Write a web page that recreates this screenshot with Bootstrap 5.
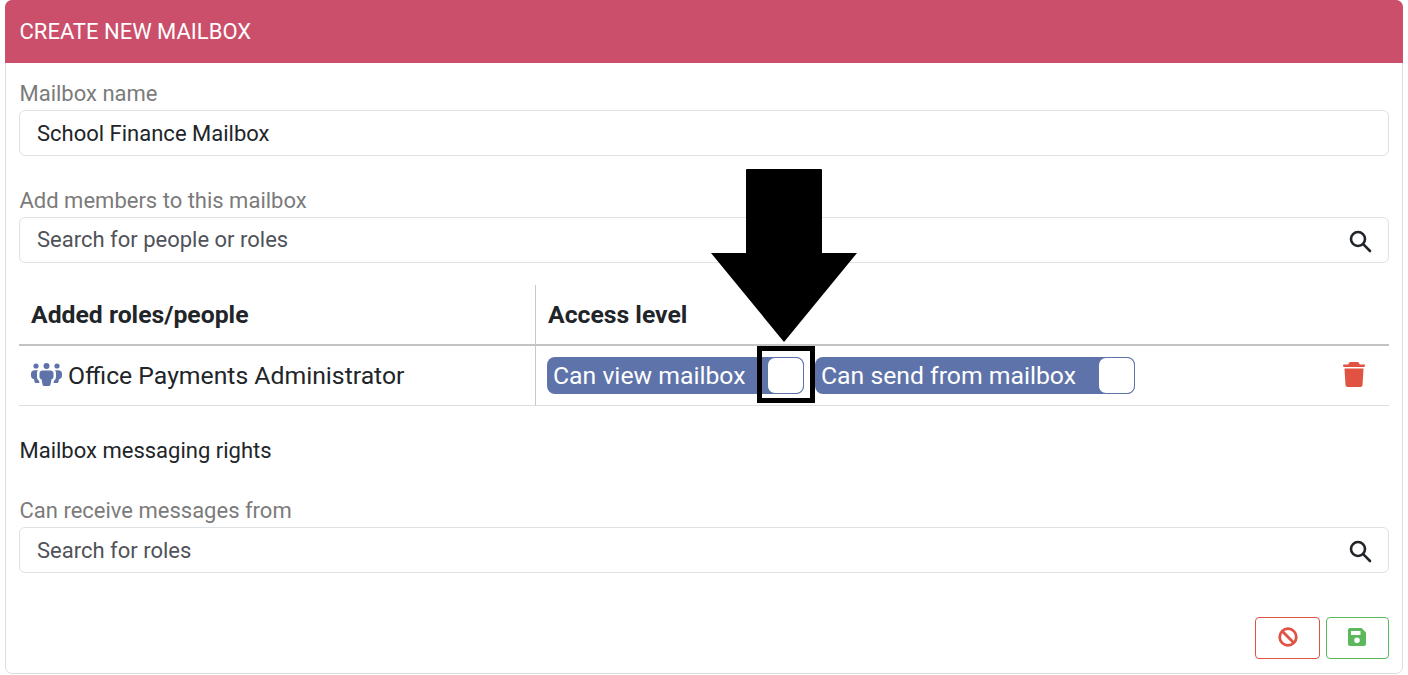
<!DOCTYPE html>
<html lang="en">
<head>
<meta charset="utf-8">
<title>Create new mailbox</title>
<link rel="stylesheet" href="https://cdn.jsdelivr.net/npm/bootstrap@5.3.0/dist/css/bootstrap.min.css">
<style>
html, body { height: 100%; background: #fff; overflow: hidden; }
body { font-family: Roboto, "Liberation Sans", sans-serif; color: #212529; position: relative; padding: 0 5px; }
.mb-panel { height: 674px; border: 1px solid #dedede; border-radius: 7px; }
.mb-head { background: #cb4e6a; color: #fff; height: 63px; margin: -1px -1px 0; padding: 0 14.5px; font-size: 22px; display: flex; align-items: center; border: 0; border-radius: 7px 7px 0 0 !important; }
.mb-body { padding: 15px 13px 0; display: flex; flex-direction: column; }
.mb-label { font-size: 22px; color: #7b7b7b; line-height: 32px; margin: 0; display: block; height: 32px; padding-left: .5px; }
.mb-input { height: 46px; font-size: 22px; padding: 0 17px; border: 1px solid #dee2e6; border-radius: 6px; color: #212529; background: #fff; box-shadow: none; }
.mb-input::placeholder { color: #4f5359; opacity: 1; }
.mb-input-up { padding-bottom: 2px; }
.mb-search { position: relative; }
.mb-search svg { position: absolute; right: 17px; top: 12px; }
.mb-gap1 { margin-top: 29px; }
.mb-tablewrap { margin-top: 22px; }
.mb-grid { display: grid; grid-template-columns: 516px 1fr; }
.mb-th { font-size: 24.75px; font-weight: 700; height: 61px; border-bottom: 2px solid #c4c4c4; display: flex; align-items: center; padding: 0 12px; padding-top: 1px; }
.mb-td { height: 60px; border-bottom: 1px solid #dedede; display: flex; align-items: center; padding: 0 12px; font-size: 24.75px; }
.mb-v { border-left: 1px solid #c9c9c9; }
.mb-td.mb-v { padding-left: 11px; }
.mb-role { gap: 6px; }
.mb-people { margin-top: -2px; }
.mb-tog { height: 37px; background: #5e73a9; color: #fff; border-radius: 8px; display: inline-flex; align-items: center; padding-left: 6px; position: relative; font-size: 24.75px; white-space: nowrap; }
.mb-tog i { position: absolute; right: 0; top: 0; width: 37px; height: 37px; background: #fff; border: 1px solid #5e73a9; border-radius: 8px; display: block; }
.mb-t1 { width: 257px; }
.mb-t2 { width: 320px; margin-left: 11px; }
.mb-bin { margin-left: auto; margin-right: 12px; margin-top: -2px; display: block; }
.mb-rights { font-size: 22px; line-height: 32px; margin: 29px 0 0 .5px; }
.mb-gap2 { margin-top: 28px; }
.mb-actions { margin-top: 44px; display: flex; justify-content: flex-end; gap: 6px; }
.mb-btn { height: 42px; padding: 0 0 2px; display: flex; align-items: center; justify-content: center; background: #fff; border-radius: 4px; }
.mb-btn-r { width: 65px; border: 1px solid #e05343; }
.mb-btn-g { width: 63px; border: 1px solid #5cb85c; padding-right: 1px; }
.mb-focus { position: absolute; left: 757px; top: 346px; width: 58px; height: 57px; border: 5px solid #000; z-index: 3; }
.mb-arrow { position: absolute; left: 711px; top: 169px; z-index: 3; }
</style>
</head>
<body>
<div class="card mb-panel">
  <div class="card-header mb-head">CREATE NEW MAILBOX</div>
  <div class="card-body mb-body">
    <label class="mb-label" for="f1">Mailbox name</label>
    <input id="f1" class="form-control mb-input" value="School Finance Mailbox">
    <label class="mb-label mb-gap1" for="f2">Add members to this mailbox</label>
    <div class="mb-search">
      <input id="f2" class="form-control mb-input mb-input-up" placeholder="Search for people or roles">
      <svg width="24" height="24" viewBox="0 0 24 24" fill="none" stroke="#212529" stroke-width="2.6"><circle cx="10" cy="10" r="7"/><path d="M15.2 15.2 22 22" stroke-linecap="round"/></svg>
    </div>
    <div class="mb-tablewrap mb-grid">
      <div class="mb-th">Added roles/people</div>
      <div class="mb-th mb-v">Access level</div>
      <div class="mb-td mb-role">
        <svg class="mb-people" width="31" height="23" viewBox="0 0 31 23" fill="#5e73a9"><circle cx="15.500" cy="3" r="3"/><circle cx="5" cy="3" r="2.600"/><circle cx="26" cy="3" r="2.600"/><path d="M11.500 7.500h8c1.700 0 3 1.200 3 3v3.500c0 1.200-.8 2-2 2.300L19.500 21.500c-.2.900-.8 1.500-1.700 1.500h-4.600c-.9 0-1.500-.6-1.700-1.500L10.500 16.300c-1.200-.3-2-1.100-2-2.300v-3.500c0-1.800 1.300-3 3-3Z"/><path d="M3.500 7.300H7C6.200 8.200 6 9.300 6 10.500V14c0 1.500.7 2.900 2 3.700l.5 2.300H5c-.8 0-1.200-.4-1.400-1.100L3 16.200C1.200 15.700 0 14.500 0 12.800v-2C0 8.700 1.500 7.300 3.500 7.300Z"/><path d="M27.500 7.300H24c.8.900 1 2 1 3.200V14c0 1.500-.7 2.900-2 3.700l-.5 2.300H26c.8 0 1.200-.4 1.400-1.100l.6-2.700c1.800-.5 3-1.700 3-3.400v-2c0-2.100-1.500-3.500-3.500-3.500Z"/></svg>
        <span>Office Payments Administrator</span>
      </div>
      <div class="mb-td mb-v">
        <span class="mb-tog mb-t1">Can view mailbox<i></i></span>
        <span class="mb-tog mb-t2">Can send from mailbox<i></i></span>
        <svg class="mb-bin" width="22" height="25" viewBox="0 0 22 25" fill="#e05343"><path d="M7.500 0h7c.7 0 1.200.4 1.500 1l.7 1.500H21c.6 0 1 .5 1 1.100s-.4 1.400-1 1.400H1C.4 5 0 4.200 0 3.600S.4 2.500 1 2.500h4.300L6 1c.3-.6.800-1 1.500-1Z"/><path d="M1.500 6.500h19L19.500 23c-.1 1.200-1 2-2.200 2H4.700c-1.200 0-2.100-.8-2.200-2Z"/></svg>
      </div>
    </div>
    <div class="mb-rights">Mailbox messaging rights</div>
    <label class="mb-label mb-gap2" for="f3">Can receive messages from</label>
    <div class="mb-search">
      <input id="f3" class="form-control mb-input" placeholder="Search for roles">
      <svg width="24" height="24" viewBox="0 0 24 24" fill="none" stroke="#212529" stroke-width="2.6"><circle cx="10" cy="10" r="7"/><path d="M15.2 15.2 22 22" stroke-linecap="round"/></svg>
    </div>
    <div class="mb-actions">
      <button type="button" class="btn mb-btn mb-btn-r" aria-label="Cancel"><svg width="20" height="20" viewBox="0 0 20 20" fill="none" stroke="#e05343" stroke-width="2.800"><circle cx="10" cy="10" r="8.300"/><path d="M4 4 16 16"/></svg></button>
      <button type="button" class="btn mb-btn mb-btn-g" aria-label="Save"><svg width="18" height="18" viewBox="0 0 18 18" fill="#5cb85c"><path fill-rule="evenodd" d="M2 0h11.500L18 4.500V16c0 1.100-.9 2-2 2H2c-1.100 0-2-.9-2-2V2C0 .9.900 0 2 0Zm1 3v4h9.500V3ZM9 9.500a2.800 2.800 0 1 0 0 5.600 2.800 2.800 0 0 0 0-5.600Z"/></svg></button>
    </div>
  </div>
</div>
<div class="mb-focus"></div>
<svg class="mb-arrow" width="146" height="174" viewBox="0 0 146 174" fill="#000"><path d="M36 0h74a1 1 0 0 1 1 1v83h35L73 173 0 84h35V1a1 1 0 0 1 1-1Z"/></svg>
<script src="https://cdn.jsdelivr.net/npm/bootstrap@5.3.0/dist/js/bootstrap.bundle.min.js"></script>
</body>
</html>
